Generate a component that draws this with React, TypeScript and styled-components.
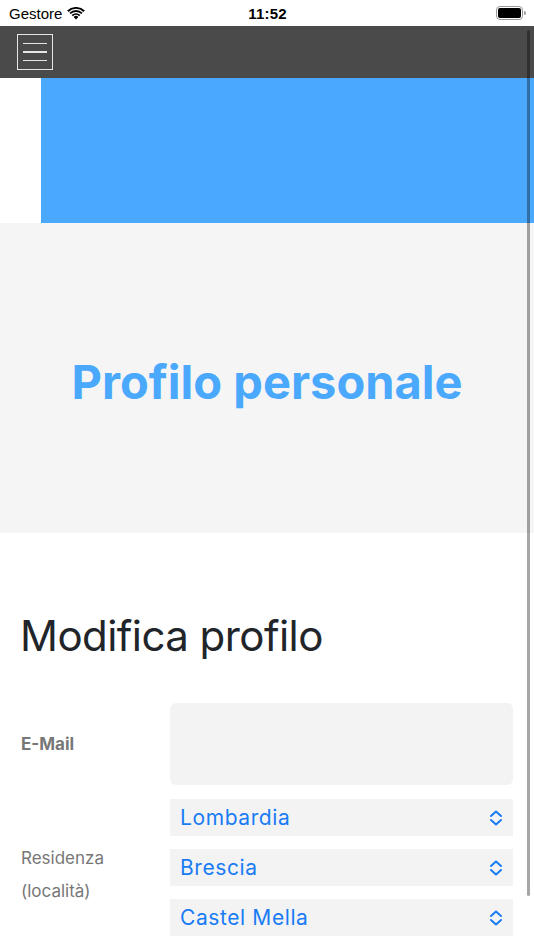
import React from 'react';
import styled, { createGlobalStyle } from 'styled-components';

// ── Global ─────────────────────────────────────────────────────────────────

const GlobalStyle = createGlobalStyle`
  html, body {
    margin: 0;
    padding: 0;
    background: #fff;
    font-family: Inter, "Noto Sans", sans-serif;
  }
  * { box-sizing: border-box; }
`;

// ── Styled components ──────────────────────────────────────────────────────

const Screen = styled.div`
  position: relative;
  width: 534px;
  height: 950px;
  overflow: hidden;
  background: #fff;
`;

const StatusBar = styled.div`
  height: 26px;
  display: grid;
  grid-template-columns: 1fr auto 1fr;
  align-items: center;
  padding: 0 8px 0 9px;
  font-family: "Liberation Sans", Arial, sans-serif;
  font-size: 15px;
  color: #000;
`;

const Carrier = styled.div`
  display: flex;
  align-items: center;
  gap: 5px;
`;

const Clock = styled.div`
  font-weight: 600;
  letter-spacing: 0.2px;
`;

const Battery = styled.div`
  justify-self: end;
  display: flex;
  align-items: center;
`;

const NavBar = styled.div`
  height: 52px;
  background: #4a4a4a;
  display: flex;
  align-items: center;
  padding-left: 17px;
`;

const MenuButton = styled.button`
  width: 36px;
  height: 36px;
  border: 1.5px solid #e6e6e6;
  background: transparent;
  padding: 0;
  display: flex;
  flex-direction: column;
  justify-content: center;
  align-items: center;
  gap: 7px;
`;

const MenuLine = styled.span`
  display: block;
  width: 24px;
  height: 1.5px;
  background: #e6e6e6;
`;

const BannerRow = styled.div`
  height: 145px;
  display: flex;
`;

const BannerBlue = styled.div`
  margin-left: 41px;
  flex: 1;
  background: #4aa9fd;
`;

const Hero = styled.div`
  height: 310px;
  background: #f5f5f5;
  display: flex;
  align-items: center;
  justify-content: center;
`;

const HeroTitle = styled.h1`
  margin: 0;
  padding-top: 6px;
  font-family: Inter, sans-serif;
  font-weight: 700;
  font-size: 47px;
  letter-spacing: 0px;
  color: #4aa9fd;
`;

const Content = styled.div`
  padding: 76px 21px 0 21px;
`;

const SectionTitle = styled.h2`
  margin: 0 0 40px -1px;
  font-family: Inter, sans-serif;
  font-weight: 400;
  font-size: 42px;
  letter-spacing: -0.55px;
  color: #212529;
  line-height: 54px;
`;

const FormRow = styled.div`
  display: grid;
  grid-template-columns: 149px 1fr;
  align-items: center;
  margin-bottom: 14px;
`;

const Label = styled.div<{ $bold?: boolean }>`
  padding-top: ${({ $bold }) => ($bold ? 0 : 14)}px;
  font-family: Inter, sans-serif;
  font-size: 17px;
  font-weight: ${({ $bold }) => ($bold ? 700 : 400)};
  color: #777;
  line-height: 33px;
`;

const TextInput = styled.div`
  height: 82px;
  background: #f3f3f3;
  border-radius: 6px;
`;

const SelectStack = styled.div`
  display: flex;
  flex-direction: column;
  gap: 13px;
`;

const Select = styled.div`
  height: 37px;
  background: #f3f3f3;
  display: flex;
  align-items: center;
  justify-content: space-between;
  padding: 0 10px 0 10px;
  font-family: Inter, sans-serif;
  font-size: 21px;
  color: #1a7cf5;
  letter-spacing: 0.6px;
`;

const ScrollIndicator = styled.div`
  position: absolute;
  right: 4px;
  top: 30px;
  width: 3px;
  height: 866px;
  border-radius: 2px;
  background: rgba(0, 0, 0, 0.35);
`;

// ── Icons ──────────────────────────────────────────────────────────────────

const WifiIcon = () => (
  <svg width="18" height="13" viewBox="0 0 18 13">
    <path d="M9 12.5 L6.6 10 A3.4 3.4 0 0 1 11.4 10 Z" fill="#000" />
    <path d="M4.6 8 A6.3 6.3 0 0 1 13.4 8 L12.1 9.3 A4.5 4.5 0 0 0 5.9 9.3 Z" fill="#000" />
    <path d="M2.4 5.8 A9.4 9.4 0 0 1 15.6 5.8 L14.3 7.1 A7.6 7.6 0 0 0 3.7 7.1 Z" fill="#000" />
    <path d="M0.2 3.6 A12.5 12.5 0 0 1 17.8 3.6 L16.5 4.9 A10.7 10.7 0 0 0 1.5 4.9 Z" fill="#000" />
  </svg>
);

const BatteryIcon = () => (
  <svg width="30" height="14" viewBox="0 0 30 14">
    <rect x="0.5" y="0.5" width="26" height="13" rx="3.5" fill="none" stroke="#999" />
    <rect x="2" y="2" width="23" height="10" rx="2" fill="#000" />
    <path d="M28 5 a1.5 1.5 0 0 1 0 4 z" fill="#999" />
  </svg>
);

const UpDownIcon = () => (
  <svg width="14" height="16" viewBox="0 0 14 16">
    <path d="M2 6 L7 1.5 L12 6 M2 10 L7 14.5 L12 10" fill="none" stroke="#1a7cf5" strokeWidth="2" strokeLinecap="round" strokeLinejoin="round" />
  </svg>
);

// ── Main component ─────────────────────────────────────────────────────────

const LOCATIONS = ['Lombardia', 'Brescia', 'Castel Mella'];

const App: React.FC = () => (
  <Screen>
    <GlobalStyle />
    <StatusBar>
      <Carrier>
        Gestore <WifiIcon />
      </Carrier>
      <Clock>11:52</Clock>
      <Battery>
        <BatteryIcon />
      </Battery>
    </StatusBar>

    <NavBar>
      <MenuButton aria-label="menu">
        <MenuLine />
        <MenuLine />
        <MenuLine />
      </MenuButton>
    </NavBar>

    <BannerRow>
      <BannerBlue />
    </BannerRow>

    <Hero>
      <HeroTitle>Profilo personale</HeroTitle>
    </Hero>

    <Content>
      <SectionTitle>Modifica profilo</SectionTitle>

      <FormRow>
        <Label $bold>E-Mail</Label>
        <TextInput />
      </FormRow>

      <FormRow>
        <Label>
          Residenza
          <br />
          (località)
        </Label>
        <SelectStack>
          {LOCATIONS.map(loc => (
            <Select key={loc}>
              {loc}
              <UpDownIcon />
            </Select>
          ))}
        </SelectStack>
      </FormRow>
    </Content>

    <ScrollIndicator />
  </Screen>
);

export default App;
